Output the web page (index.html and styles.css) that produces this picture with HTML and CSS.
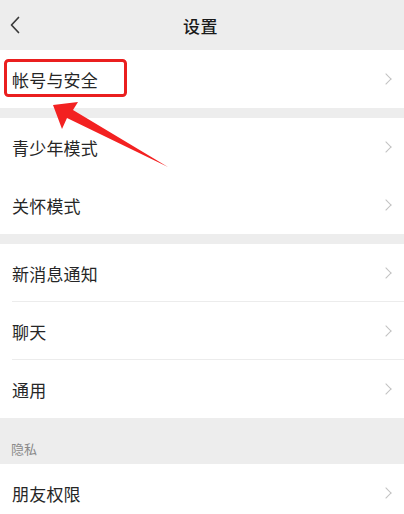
FILE: index.html
```html
<!DOCTYPE html>
<html lang="zh">
<head>
<meta charset="utf-8">
<link rel="stylesheet" href="styles.css">
</head>
<body>
<div class="page">
  <header class="topbar">
    <svg class="back" width="12" height="18" viewBox="0 0 12 18"><path d="M9.5 1.5 L2.5 9 L9.5 16.5" fill="none" stroke="#3a3a3a" stroke-width="1.7" stroke-linecap="round" stroke-linejoin="round"/></svg>
    <div class="title">设置</div>
  </header>

  <section class="group">
    <div class="row"><span class="label">帐号与安全</span><span class="chev"></span></div>
  </section>

  <section class="group">
    <div class="row"><span class="label">青少年模式</span><span class="chev"></span></div>
    <div class="row"><span class="label">关怀模式</span><span class="chev"></span></div>
  </section>

  <section class="group">
    <div class="row sep"><span class="label">新消息通知</span><span class="chev"></span></div>
    <div class="row sep"><span class="label">聊天</span><span class="chev"></span></div>
    <div class="row"><span class="label">通用</span><span class="chev"></span></div>
  </section>

  <div class="section-title">隐私</div>
  <section class="group first">
    <div class="row"><span class="label">朋友权限</span><span class="chev"></span></div>
  </section>

  <svg class="annot" width="404" height="200" viewBox="0 0 404 200">
    <rect x="5.5" y="60.5" width="120" height="35" rx="3" ry="3" fill="none" stroke="#ea1f1f" stroke-width="3"/>
    <polygon points="53,105 78,102 73,110 168,167 67,118 62,129" fill="#f32121"/>
  </svg>
</div>
</body>
</html>
```

FILE: styles.css
```css
* { box-sizing: border-box; }
html, body { margin: 0; padding: 0; }
body {
  background: #ededed;
  font-family: "Noto Sans CJK SC", "Noto Sans", sans-serif;
  color: #1f1f1f;
}
.page {
  position: relative;
  width: 404px;
  height: 514px;
  overflow: hidden;
  background: #ededed;
}
.topbar {
  height: 50px;
  display: flex;
  align-items: center;
  justify-content: center;
  position: relative;
}
.back {
  position: absolute;
  left: 9px;
  top: 16px;
}
.title {
  font-size: 17px;
  font-weight: 500;
  color: #1a1a1a;
  letter-spacing: 0.5px;
  margin-left: -3px;
}
.group {
  background: #fff;
  margin-bottom: 10px;
}
.row {
  height: 58px;
  display: flex;
  align-items: center;
  justify-content: space-between;
  padding: 0 14px 0 12px;
  position: relative;
}
.row.sep::after {
  content: "";
  position: absolute;
  left: 12px;
  right: 0;
  bottom: 0;
  height: 1px;
  background: #ececec;
}
.label {
  font-size: 17px;
  color: #262626;
  letter-spacing: 0.2px;
}
.chev {
  width: 8px;
  height: 8px;
  border-top: 1.5px solid #c2c2c2;
  border-right: 1.5px solid #c2c2c2;
  transform: rotate(45deg);
}
.section-title {
  height: 46px;
  margin-top: -10px;
  padding: 21px 0 0 11px;
  font-size: 13px;
  color: #8a8a8a;
}
.annot {
  position: absolute;
  left: 0;
  top: 0;
  pointer-events: none;
}
```
